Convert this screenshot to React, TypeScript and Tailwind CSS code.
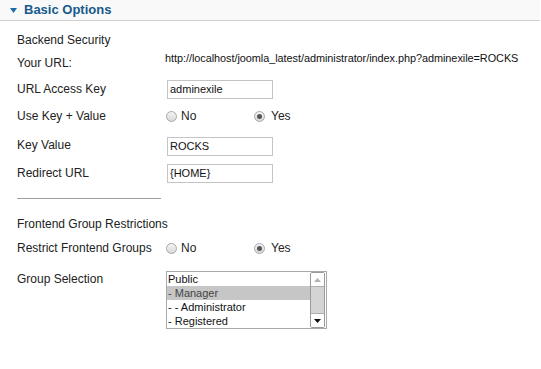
import React from 'react';

const font = { fontFamily: '"Liberation Sans", Arial, sans-serif' };

function Radio({ checked }: { checked?: boolean }) {
  return (
    <span className="flex h-[11px] w-[11px] items-center justify-center rounded-full border border-[#a8a8a8] bg-gradient-to-b from-[#f4f4f4] to-[#d8d8d8]">
      {checked && <span className="h-[5px] w-[5px] rounded-full bg-[#555]" />}
    </span>
  );
}

function RadioPair({ value }: { value: 'no' | 'yes' }) {
  return (
    <div className="flex items-center text-[12px] text-[#222]">
      <div className="flex w-[89px] items-center gap-[4px] pl-[1px]">
        <Radio checked={value === 'no'} />
        <span>No</span>
      </div>
      <div className="flex items-center gap-[6px]">
        <Radio checked={value === 'yes'} />
        <span>Yes</span>
      </div>
    </div>
  );
}

function TextBox({ value }: { value: string }) {
  return (
    <div className="ml-[2px] flex h-[19px] w-[106px] items-center border border-[#c4c4c4] bg-white pl-[2px] text-[11px] text-[#111]">
      {value}
    </div>
  );
}

function Row({ label, h, children }: { label: string; h: string; children?: React.ReactNode }) {
  return (
    <div className={`flex items-center ${h}`}>
      <div className="w-[148px] shrink-0 text-[12px] text-[#222]">{label}</div>
      {children}
    </div>
  );
}

const groups = ['Public', '- Manager', '- - Administrator', '- Registered'];

export default function App() {
  return (
    <div className="h-[369px] w-[541px] bg-white" style={font}>
      <div className="flex h-[21px] w-[540px] items-center border-b border-[#cfcfcf] bg-[#f9f9f9] pl-[10px]">
        <svg width="7" height="5" viewBox="0 0 7 5" className="mr-[7px]">
          <polygon points="0,0 7,0 3.5,5" fill="#1b6ca8" />
        </svg>
        <span className="text-[13px] font-bold text-[#17598b]">Basic Options</span>
      </div>

      <div className="pl-[17px]">
        <div className="mt-[9px] flex h-[20px] items-center text-[12px] text-[#222]">Backend Security</div>

        <Row label="Your URL:" h="h-[26px]">
          <span className="pb-[10px] text-[10.9px] tracking-[-0.05px] text-[#111]">
            http://localhost/joomla_latest/administrator/index.php?adminexile=ROCKS
          </span>
        </Row>

        <Row label="URL Access Key" h="h-[26px]">
          <TextBox value="adminexile" />
        </Row>

        <Row label="Use Key + Value" h="h-[28px]">
          <RadioPair value="yes" />
        </Row>

        <Row label="Key Value" h="h-[30px]">
          <div className="pt-[2px]">
            <TextBox value="ROCKS" />
          </div>
        </Row>

        <Row label="Redirect URL" h="h-[24px] pt-[1px]">
          <div className="pt-[1px]">
            <TextBox value="{HOME}" />
          </div>
        </Row>

        <div className="mt-[14px] h-px w-[144px] bg-[#a0a0a0]" />

        <div className="mt-[15px] flex h-[20px] items-center text-[12px] text-[#222]">
          Frontend Group Restrictions
        </div>

        <Row label="Restrict Frontend Groups" h="h-[24px] mt-[2px]">
          <RadioPair value="yes" />
        </Row>

        <div className="mt-[11px] flex items-start">
          <div className="w-[148px] shrink-0 pt-[1px] text-[12px] leading-[14px] text-[#222]">Group Selection</div>
          <div className="ml-[1px] flex h-[58px] w-[161px] border border-[#a9a9a9] bg-white">
            <div className="flex-1 text-[11px] leading-[14px]">
              {groups.map((g, i) => (
                <div
                  key={g}
                  className={`h-[14px] pl-[1px] ${i === 1 ? 'bg-[#c6c6c6] text-[#444]' : 'text-[#111]'}`}
                >
                  {g}
                </div>
              ))}
            </div>
            <div className="mr-[1px] flex w-[15px] flex-col rounded-[2px] border border-[#9a9a9a] bg-[#e8e8e8]">
              <div className="flex h-[14px] items-center justify-center border-b border-[#b0b0b0] bg-white">
                <svg width="7" height="4" viewBox="0 0 7 4">
                  <polygon points="0,4 7,4 3.5,0" fill="#b0b0b0" />
                </svg>
              </div>
              <div className="flex-1 bg-[#d4d4d4]" />
              <div className="flex h-[14px] items-center justify-center border-t border-[#b0b0b0] bg-white">
                <svg width="7" height="4" viewBox="0 0 7 4">
                  <polygon points="0,0 7,0 3.5,4" fill="#111" />
                </svg>
              </div>
            </div>
          </div>
        </div>
      </div>
    </div>
  );
}
